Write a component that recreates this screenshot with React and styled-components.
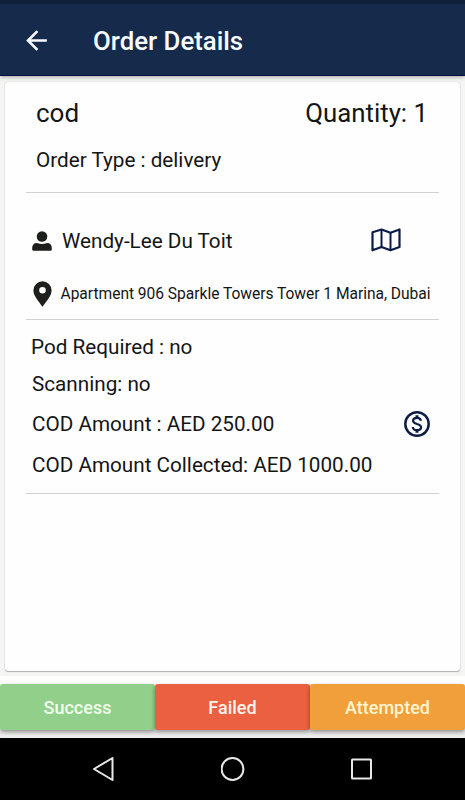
import React from 'react';
import styled, { createGlobalStyle } from 'styled-components';
import { MdArrowBack } from 'react-icons/md';

const GlobalStyle = createGlobalStyle`
  * {
    box-sizing: border-box;
  }

  body {
    margin: 0;
    background: #fff;
    font-family: Roboto, 'Liberation Sans', sans-serif;
  }
`;

const Screen = styled.div`
  width: 465px;
  height: 800px;
  display: flex;
  flex-direction: column;
  overflow: hidden;
`;

const Header = styled.header`
  height: 76px;
  flex: none;
  display: flex;
  align-items: center;
  padding: 2px 21px 0;
  color: #f8fbff;
  background: #162b4c;
  border-top: 4px solid #0e2138;
  border-bottom: 1px solid #080f3e;
  box-shadow: 0 1px 4px rgba(0, 0, 0, 0.35);
  z-index: 1;
`;

const BackButton = styled.button`
  display: flex;
  padding: 0;
  border: none;
  background: none;
  color: inherit;
  cursor: pointer;
`;

const Title = styled.h1`
  margin: 0 0 0 41px;
  font-size: 25.8px;
  line-height: 30px;
  font-weight: 500;
`;

const Content = styled.main`
  height: 600px;
  flex: none;
  padding: 6px 5px 5px;
  background: #f5f5f4;
`;

const Card = styled.section`
  height: 589px;
  padding: 0 21px;
  background: #fefefe;
  border-radius: 3px;
  box-shadow: 0 0 1px rgba(0, 0, 0, 0.35), 0 1px 1px rgba(0, 0, 0, 0.25);
`;

const Row = styled.div`
  display: flex;
  align-items: center;
  justify-content: ${props => (props.$spread ? 'space-between' : 'flex-start')};
  height: ${props => props.$height}px;
  padding-left: ${props => props.$left}px;
  padding-right: ${props => props.$right || 0}px;
`;

const Text = styled.span`
  font-size: ${props => props.$size || 20.7}px;
  color: #151515;
  white-space: nowrap;
`;

const Address = styled(Text)`
  font-size: 15.6px;
  letter-spacing: -0.035px;
`;

const Person = styled.span`
  display: flex;
  align-items: center;
  gap: ${props => props.$gap}px;
`;

const Divider = styled.hr`
  height: 1px;
  margin: ${props => props.$top || 0}px 0 ${props => props.$bottom || 0}px;
  border: none;
  background: #d0d0d0;
`;

const Icon = styled.svg`
  display: block;
  flex: none;
`;

const Actions = styled.div`
  height: 62px;
  flex: none;
  display: flex;
  padding: 8px 0;
  background: linear-gradient(#fff 60%, #ededed 60%);
  overflow: hidden;
`;

const ActionButton = styled.button`
  flex: 1;
  padding: 0;
  border: none;
  border-radius: 3px;
  background: ${props => props.$background};
  color: ${props => props.$color};
  font-family: inherit;
  font-size: 18px;
  font-weight: 500;
  box-shadow: 0 2px 4px rgba(0, 0, 0, 0.4);
  cursor: pointer;
`;

const NavBar = styled.nav`
  flex: 1;
  display: flex;
  align-items: center;
  justify-content: space-between;
  padding: 0 91px;
  background: #000;
`;

const UserIcon = () => (
  <Icon width="20" height="20" viewBox="0 0 20 20" fill="#1d1f1d">
    <circle cx="10" cy="5.5" r="5.3" />
    <path d="M5 12 Q10 14 15 12 C18.3 12 19.8 14 19.8 17 V18.4 Q19.8 19.8 18.4 19.8 H1.6 Q.2 19.8 .2 18.4 V17 C.2 14 1.7 12 5 12Z" />
  </Icon>
);

const PinIcon = () => (
  <Icon width="19" height="26" viewBox="0 0 19 26">
    <path
      fill="#1d1f1d"
      fillRule="evenodd"
      d="M9.5 .3A9.1 9.1 0 0 0 .4 9.4C.4 15.3 6.8 21.4 9.5 25.8C12.2 21.4 18.6 15.3 18.6 9.4A9.1 9.1 0 0 0 9.5 .3ZM9.5 6A3.3 3.3 0 1 1 9.5 12.6A3.3 3.3 0 1 1 9.5 6Z"
    />
  </Icon>
);

const MapIcon = () => (
  <Icon
    width="30"
    height="26"
    viewBox="0 0 30 26"
    fill="none"
    stroke="#0c1c46"
    strokeWidth="2.2"
    strokeLinejoin="round"
  >
    <path d="M1.5 4.3 L10.5 1.5 L19.5 4.8 L28.5 1.5 V19 L19.5 22.3 L10.5 19 L1.5 22.3Z" />
    <path d="M10.5 1.5 V19 M19.5 4.8 V22.3" strokeWidth="2" />
  </Icon>
);

const MoneyIcon = () => (
  <Icon width="26" height="26" viewBox="0 0 26 26" fill="none" stroke="#0c1c46">
    <circle cx="13" cy="13" r="11.7" strokeWidth="2.5" />
    <path
      d="M17 9.8 C16.6 7.6 15 6.8 13 6.8 C10.8 6.8 9.1 7.9 9.1 9.8 C9.1 11.8 10.9 12.4 13 13 C15.4 13.6 17.1 14.3 17.1 16.3 C17.1 18.2 15.3 19.2 13 19.2 C10.7 19.2 9 18.2 8.8 16"
      strokeWidth="2.2"
    />
    <path d="M13 4.2 V7 M13 19 V21.8" strokeWidth="2.9" />
  </Icon>
);

const App = () => (
  <Screen>
    <GlobalStyle />
    <Header>
      <BackButton aria-label="Back">
        <MdArrowBack size={31} />
      </BackButton>
      <Title>Order Details</Title>
    </Header>

    <Content>
      <Card>
        <Row $height={62} $left={10} $right={11} $spread>
          <Text $size={26}>cod</Text>
          <Text $size={25.8}>Quantity: 1</Text>
        </Row>
        <Row $height={32} $left={10}>
          <Text>Order Type : delivery</Text>
        </Row>
        <Divider $top={16} $bottom={30} />

        <Row $height={36} $left={6} $right={38} $spread>
          <Person $gap={10}>
            <UserIcon />
            <Text>Wendy-Lee Du Toit</Text>
          </Person>
          <MapIcon />
        </Row>
        <Row $height={70} $left={7}>
          <Person $gap={8.5}>
            <PinIcon />
            <Address>Apartment 906 Sparkle Towers Tower 1 Marina, Dubai</Address>
          </Person>
        </Row>
        <Divider $top={-10} $bottom={9} />

        <Row $height={36} $left={5}>
          <Text>Pod Required : no</Text>
        </Row>
        <Row $height={38} $left={6}>
          <Text>Scanning: no</Text>
        </Row>
        <Row $height={42} $left={6} $right={9} $spread>
          <Text>COD Amount : AED 250.00</Text>
          <MoneyIcon />
        </Row>
        <Row $height={40} $left={6}>
          <Text>COD Amount Collected: AED 1000.00</Text>
        </Row>
        <Divider $top={8} />
      </Card>
    </Content>

    <Actions>
      <ActionButton $background="#91cf8b" $color="#f0ffed">Success</ActionButton>
      <ActionButton $background="#eb6040" $color="#fff3ee">Failed</ActionButton>
      <ActionButton $background="#f09f3b" $color="#fff5cf">Attempted</ActionButton>
    </Actions>

    <NavBar>
      <Icon width="24" height="26" viewBox="0 0 24 26" fill="none" stroke="#e8e8e8" strokeWidth="2">
        <path d="M21.5 2 V24 L3 13Z" strokeLinejoin="round" />
      </Icon>
      <Icon width="24" height="24" viewBox="0 0 24 24" fill="none" stroke="#e8e8e8" strokeWidth="2">
        <circle cx="11.5" cy="12" r="10.9" />
      </Icon>
      <Icon width="24" height="24" viewBox="0 0 24 24" fill="none" stroke="#e8e8e8" strokeWidth="2">
        <rect x="2" y="2.5" width="19" height="19" rx="0.5" />
      </Icon>
    </NavBar>
  </Screen>
);

export default App;
